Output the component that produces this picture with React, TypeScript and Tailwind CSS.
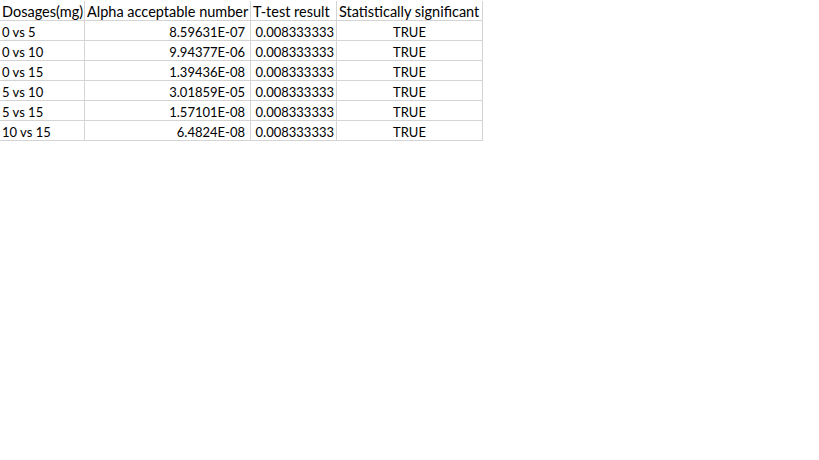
import React from "react";

const rows = [
  ["0 vs 5", "8.59631E-07", "0.008333333", "TRUE"],
  ["0 vs 10", "9.94377E-06", "0.008333333", "TRUE"],
  ["0 vs 15", "1.39436E-08", "0.008333333", "TRUE"],
  ["5 vs 10", "3.01859E-05", "0.008333333", "TRUE"],
  ["5 vs 15", "1.57101E-08", "0.008333333", "TRUE"],
  ["10 vs 15", "6.4824E-08", "0.008333333", "TRUE"],
];

const cell = "h-[20px] border-r border-b border-[#d4d4d4] px-[2px] pt-[2px] leading-[18px] whitespace-nowrap overflow-visible";

export default function App() {
  return (
    <div className="w-[819px] h-[460px] bg-white text-black font-['Lato',sans-serif] pt-[1px]">
      <div className="grid grid-cols-[85px_166px_86px_146px] w-[483px] text-[13px]">
        <div className={`${cell} text-[14.5px]`}>Dosages(mg)</div>
        <div className={`${cell} text-[14.5px]`}>Alpha acceptable number</div>
        <div className={`${cell} text-[14.5px]`}>T-test result</div>
        <div className={`${cell} text-[14.5px]`}>Statistically significant</div>
        {rows.map((r) => (
          <React.Fragment key={r[0]}>
            <div className={cell}>{r[0]}</div>
            <div className={`${cell} text-right pr-[5px]`}>{r[1]}</div>
            <div className={`${cell} text-right`}>{r[2]}</div>
            <div className={`${cell} text-center`}>{r[3]}</div>
          </React.Fragment>
        ))}
      </div>
    </div>
  );
}
